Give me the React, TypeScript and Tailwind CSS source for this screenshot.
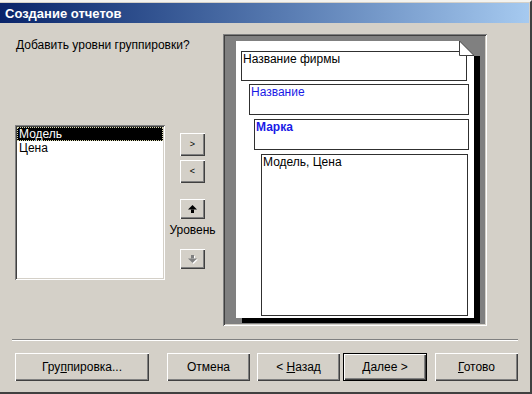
import React from "react";

const raised =
  "shadow-[inset_1px_1px_0_#ffffff,inset_-1px_-1px_0_#404040,inset_-2px_-2px_0_#808080]";

function Btn({ w, children, className = "" }: { w: string; children: React.ReactNode; className?: string }) {
  return (
    <div className={`h-[28px] ${w} bg-[#d4d0c8] ${raised} flex items-center justify-center text-[12px] leading-none ${className}`}>
      {children}
    </div>
  );
}

export default function App() {
  return (
    <div className="w-[532px] h-[394px] bg-[#d4d0c8] overflow-hidden font-['Liberation_Sans',Arial,sans-serif] text-[12px] text-black">
      <div className="w-[532px] h-[394px] border-t-2 border-t-[#f4f3ef] border-r-2 border-r-[#404040] border-b-2 border-b-[#404040] flex flex-col">
        <div className="mt-[1px] mr-[1px] h-[20px] bg-linear-to-r from-[#0a246a] to-[#a6caf0] flex items-center pl-[5px]">
          <span className="text-white font-bold text-[13px] leading-none">Создание отчетов</span>
        </div>

        {/* body */}
        <div className="h-[316px] flex pl-[15px]">
          {/* left column */}
          <div className="flex flex-col w-[150px]">
            <div className="mt-[15px] pl-[1px] leading-[14px] whitespace-nowrap">Добавить уровни группировки?</div>
            <div className="mt-[73px] w-[150px] h-[155px] bg-white p-[2px] shadow-[inset_1px_1px_0_#808080,inset_-1px_-1px_0_#ffffff,inset_2px_2px_0_#404040,inset_-2px_-2px_0_#d4d0c8]">
              <div className="h-[14px] bg-black text-white leading-[12px] pl-[1px] border border-dotted border-[#d8d8b0]">Модель</div>
              <div className="h-[14px] leading-[14px] pl-[2px]">Цена</div>
            </div>
          </div>

          {/* middle column */}
          <div className="ml-[5px] w-[45px] flex flex-col items-center">
            <Btn w="w-[25px]" className="mt-[110px] !h-[23px]">
              <span className="text-[9px]">&gt;</span>
            </Btn>
            <Btn w="w-[25px]" className="mt-[4px] !h-[23px]">
              <span className="text-[9px]">&lt;</span>
            </Btn>
            <Btn w="w-[25px]" className="mt-[16px] !h-[20px]">
              <svg width="9" height="8" viewBox="0 0 9 8">
                <polygon points="0,4.5 4.5,0 9,4.5" fill="#000" />
                <rect x="3" y="4.5" width="3" height="3.5" fill="#000" />
              </svg>
            </Btn>
            <div className="mt-[4px] leading-[14px] whitespace-nowrap">Уровень</div>
            <Btn w="w-[25px]" className="mt-[12px] !h-[20px]">
              <svg width="10" height="9" viewBox="0 0 10 9">
                <rect x="4" y="1" width="3" height="3.5" fill="#ffffff" />
                <polygon points="1,4.5 5.5,9 10,4.5" fill="#ffffff" />
                <rect x="3" y="0" width="3" height="3.5" fill="#808080" />
                <polygon points="0,3.5 4.5,8 9,3.5" fill="#808080" />
              </svg>
            </Btn>
          </div>

          {/* preview frame */}
          <div className="ml-[8px] mt-[11px] w-[264px] h-[292px] bg-[#808080] p-[2px] shadow-[inset_1px_1px_0_#808080,inset_-1px_-1px_0_#ffffff,inset_2px_2px_0_#404040,inset_-2px_-2px_0_#d4d0c8]">
            <div className="relative ml-[11px] mt-[5px] w-[238px] h-[277px]">
              <div className="absolute left-[6px] top-[15px] w-[238px] h-[267px] bg-black" />
              <div className="relative w-full h-full bg-white flex flex-col pt-[10px]">
                <div className="ml-[5px] w-[226px] h-[30px] border border-[#303030] pl-[1px] leading-[14px]">Название фирмы</div>
                <div className="mt-[3px] ml-[13px] w-[220px] h-[31px] border border-[#303030] pl-[1px] leading-[14px] text-[#1a1ae6]">Название</div>
                <div className="mt-[4px] ml-[18px] w-[215px] h-[31px] border border-[#303030] pl-[1px] leading-[14px] text-[#1a1ae6] font-bold">Марка</div>
                <div className="mt-[4px] ml-[25px] w-[207px] h-[162px] border border-[#303030] pl-[1px] leading-[14px]">Модель, Цена</div>
              </div>
              <svg className="absolute right-0 top-0" width="15" height="15" viewBox="0 0 15 15">
                <polygon points="0,0 15,0 15,15" fill="#808080" />
                <polygon points="0.5,0 0.5,14.5 15,14.5" fill="#ffffff" stroke="#404040" strokeWidth="1" />
              </svg>
            </div>
          </div>
        </div>

        {/* separator */}
        <div className="ml-[12px] mr-[12px] h-[2px] border-t border-t-[#808080] border-b border-b-white" />

        {/* buttons */}
        <div className="mt-[12px] flex">
          <Btn w="w-[134px]" className="ml-[15px]">
            <span>Гру<u>п</u>пировка...</span>
          </Btn>
          <Btn w="w-[83px]" className="ml-[18px]">
            <span>Отмена</span>
          </Btn>
          <Btn w="w-[83px]" className="ml-[7px]">
            <span>&lt; <u>Н</u>азад</span>
          </Btn>
          <div className="ml-[3px] w-[84px] h-[28px] border border-black">
            <div className={`w-full h-full ${raised} flex items-center justify-center leading-none`}>
              <span><u>Д</u>алее &gt;</span>
            </div>
          </div>
          <Btn w="w-[83px]" className="ml-[8px]">
            <span><u>Г</u>отово</span>
          </Btn>
        </div>
      </div>
    </div>
  );
}
